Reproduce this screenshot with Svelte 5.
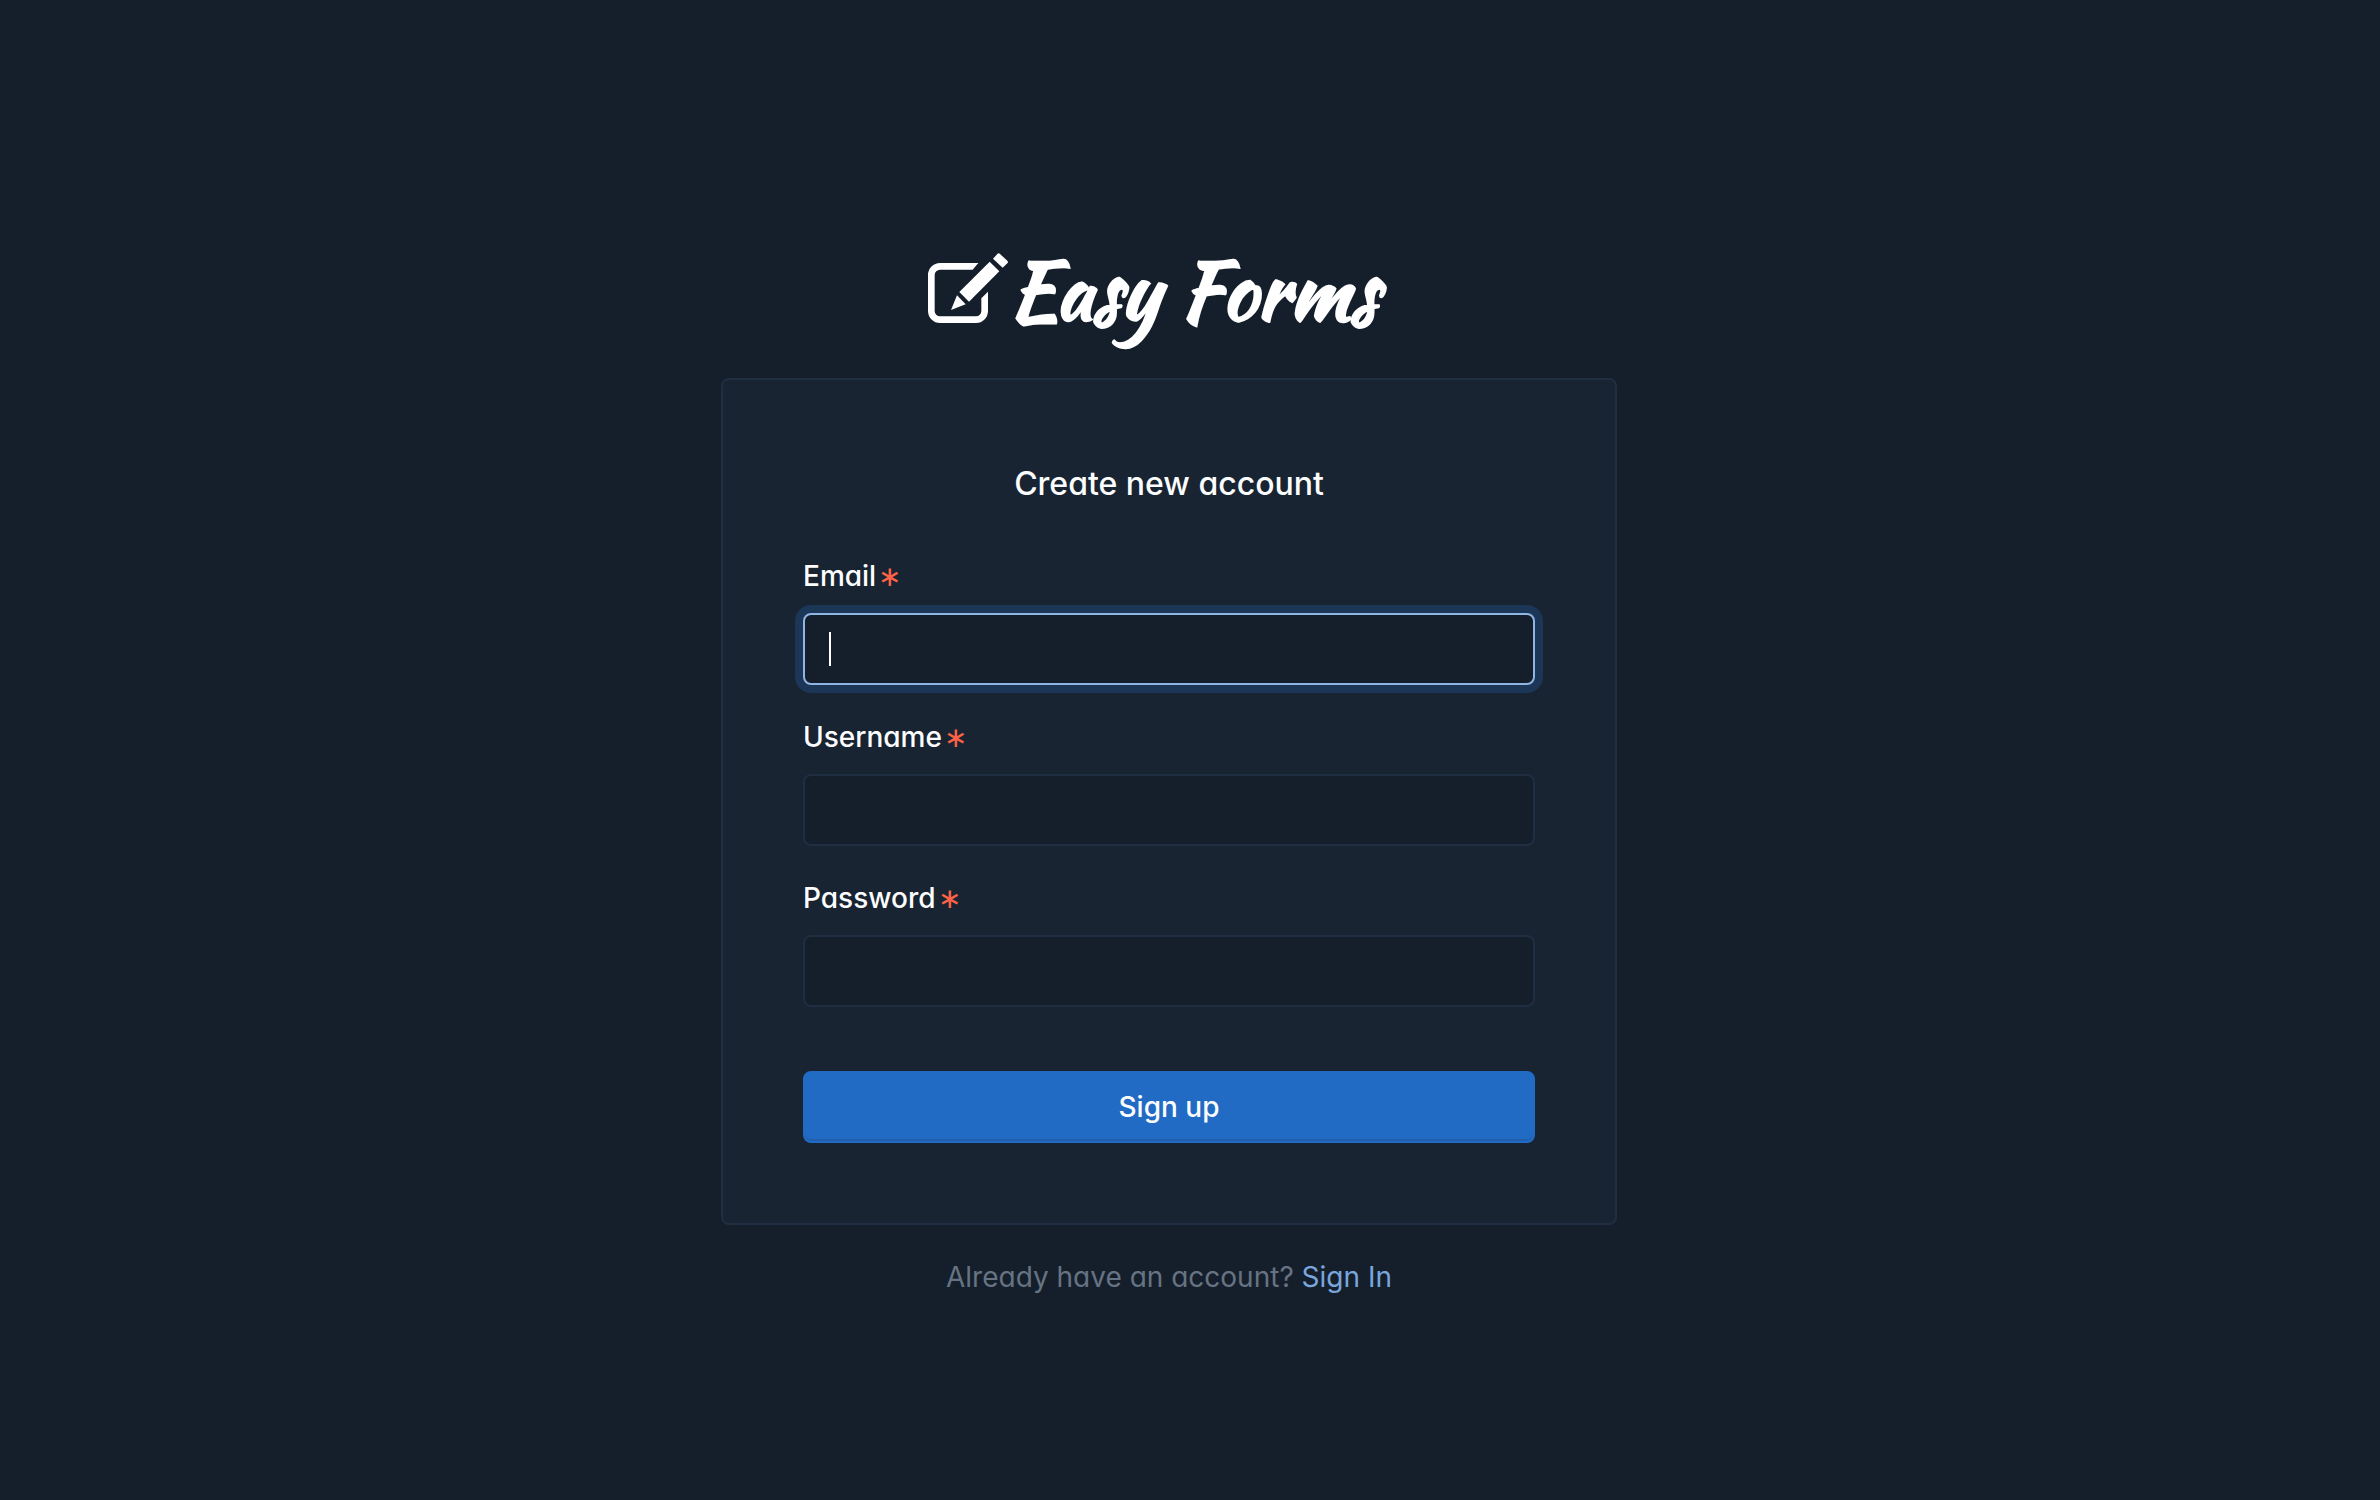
<script>
  const fields = [
    { id: 'email', label: 'Email', type: 'email', autocomplete: 'email' },
    { id: 'username', label: 'Username', type: 'text', autocomplete: 'username' },
    { id: 'password', label: 'Password', type: 'password', autocomplete: 'new-password' }
  ];

  let values = $state({ email: '', username: '', password: '' });
  let active = $state('email');
</script>

<svelte:head>
  <title>Easy Forms</title>
</svelte:head>

<div class="page">
  <main class="container">
    <a class="brand" href="/" aria-label="Easy Forms">
      <svg class="mark" viewBox="24 24 240 210" aria-hidden="true">
        <path
          d="M175 54H60a36 36 0 0 0-36 36V198a36 36 0 0 0 36 36H168a36 36 0 0 0 36-36V140L184 160V198a16 16 0 0 1-16 16H60a16 16 0 0 1-16-16V90a16 16 0 0 1 16-16H158Z"
        />
        <path d="M209 50L238 79L147 170L118 141Z" />
        <path d="M219 41L232 27Q236 23 240 27L262 47Q266 51 262 55L248 68Z" />
        <path d="M111 151L137 178L93 195Z" />
      </svg>
      <span class="wordmark">Easy Forms</span>
    </a>

    <form class="card" onsubmit={(event) => event.preventDefault()}>
      <h1>Create new account</h1>

      <div class="fields">
        {#each fields as field (field.id)}
          <div class="field">
            <label for={field.id}>{field.label}<span class="required" aria-hidden="true">∗</span></label>
            <div class="control">
              <input
                id={field.id}
                name={field.id}
                type={field.type}
                autocomplete={field.autocomplete}
                class:active={active === field.id}
                bind:value={values[field.id]}
                onfocus={() => (active = field.id)}
                required
              />
              {#if active === field.id && values[field.id] === ''}
                <span class="caret"></span>
              {/if}
            </div>
          </div>
        {/each}
      </div>

      <button type="submit">Sign up</button>
    </form>

    <p class="signin">Already have an account? <a href="/login">Sign In</a></p>
  </main>
</div>

<style>
  :global(body) {
    margin: 0;
    background: #151f2b;
  }

  .page {
    box-sizing: border-box;
    min-height: 100vh;
    padding: 240px 42px 64px 0;
    background: #151f2b;
    color: #fcfdfe;
    font-family: Inter, 'Liberation Sans', sans-serif;
    font-size: 28px;
    line-height: 40px;
    font-feature-settings: 'cv03', 'cv04', 'cv11';
  }

  .container {
    box-sizing: border-box;
    max-width: 896px;
    margin: 0 auto;
  }

  .brand {
    display: flex;
    align-items: center;
    justify-content: center;
    height: 106px;
    margin-bottom: 32px;
    padding-right: 32px;
    color: #ffffff;
    text-decoration: none;
  }

  .mark {
    width: 80px;
    height: 70px;
    margin-bottom: 10px;
    fill: currentColor;
  }

  .wordmark {
    margin-bottom: 6px;
    font-family: 'Kaushan Script', Lato, cursive;
    font-size: 80px;
    font-weight: 700;
    line-height: 106px;
    white-space: nowrap;
  }

  .card {
    padding: 80px;
    border: 2px solid #1f2e41;
    border-radius: 8px;
    background: #192432;
  }

  h1 {
    margin: 0 0 48px;
    font-size: 32px;
    font-weight: 500;
    line-height: 48px;
    text-align: center;
  }

  .fields {
    display: grid;
    gap: 32px;
    margin-bottom: 64px;
  }

  label {
    display: block;
    margin-bottom: 17px;
    font-weight: 500;
  }

  .required {
    margin-left: 2px;
    color: #ff6347;
    font-weight: 300;
  }

  .control {
    position: relative;
  }

  input {
    display: block;
    box-sizing: border-box;
    width: 100%;
    height: 72px;
    padding: 14px 24px;
    border: 2px solid #1f2e41;
    border-radius: 8px;
    outline: 0;
    background: #151f2b;
    color: inherit;
    font: inherit;
  }

  input.active {
    border-color: #90b5e2;
    box-shadow: 0 0 0 8px #1c3657;
  }

  .caret {
    position: absolute;
    top: 19px;
    left: 26px;
    width: 2px;
    height: 34px;
    background: #ffffff;
    pointer-events: none;
  }

  button {
    display: block;
    width: 100%;
    height: 72px;
    padding: 14px 32px;
    border: 2px solid #216bc4;
    border-radius: 8px;
    background: #216bc4;
    box-shadow: inset 0 -2px 0 rgba(24, 36, 51, 0.15);
    color: #fcfdfe;
    font: inherit;
    font-weight: 500;
    font-feature-settings: inherit;
    cursor: pointer;
  }

  .signin {
    margin: 32px 0 0;
    color: #667382;
    text-align: center;
  }

  .signin a {
    color: #79a6dc;
    text-decoration: none;
  }
</style>
